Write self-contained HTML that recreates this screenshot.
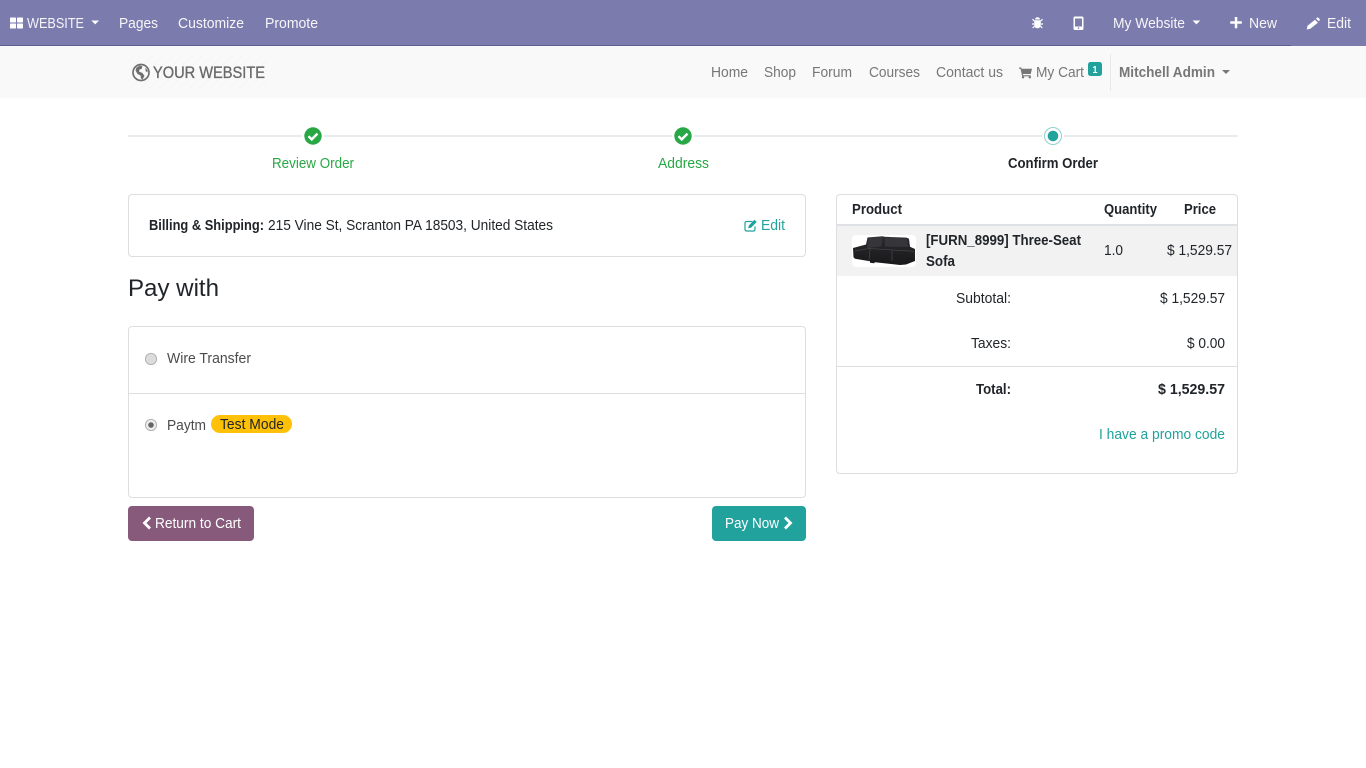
<!DOCTYPE html>
<html lang="en"><head><meta charset="utf-8"><title>Confirm Order</title>
<style>
html,body{margin:0;padding:0;background:#fff;width:1366px;height:768px;overflow:hidden}
svg{display:block}
text{font-family:"Liberation Sans",Arial,sans-serif;font-size:14.4px;fill:#212529}
.w{fill:#fff;fill-opacity:.93}
.n{fill:#777}
.b{font-weight:700}
.t{fill:#21a29c}
.g{fill:#28a745}
</style></head><body>
<svg width="1366" height="768" viewBox="0 0 1366 768" xmlns="http://www.w3.org/2000/svg">
<defs>
<pattern id="h" width="7" height="7" patternUnits="userSpaceOnUse" patternTransform="rotate(45)"><rect width="7" height="7" fill="#f9f9f9"/><rect width="1" height="7" fill="#f5f5f5"/></pattern>
<linearGradient id="sf" x1="0" y1="0" x2="0" y2="1"><stop offset="0" stop-color="#2c2c30"/><stop offset="1" stop-color="#18181a"/></linearGradient>
</defs>
<!-- top bar -->
<rect width="1366" height="45" fill="#7c7bad"/>
<rect y="45" width="1291" height="1" fill="#5f5e90"/>
<rect x="1291" y="45" width="75" height="1" fill="#7c7bad"/>
<rect y="46" width="1366" height="52" fill="#f9f9f9"/>
<g fill="#fff">
<rect x="10" y="17.500" width="6" height="5" rx=".6"/><rect x="17" y="17.500" width="6" height="5" rx=".6"/>
<rect x="10" y="23.500" width="6" height="5" rx=".6"/><rect x="17" y="23.500" width="6" height="5" rx=".6"/>
<path d="M91.300 20.500h7.800l-3.900 3.900z"/>
<path d="M1192.500 20.500h7.800l-3.900 3.900z"/>
<!-- bug -->
<path d="M1035 19.500a2.500 2.300 0 0 1 5 0zM1034.200 20.300h6.600v4.700a3.300 3.300 0 0 1-6.600 0z"/>
<path d="M1034.200 21l-1.700-1.800M1040.800 21l1.700-1.800M1034 24h-2M1041 24h2M1034.400 26.300l-1.700 1.700M1040.600 26.300l1.700 1.700" stroke="#fff" stroke-width="1.200" fill="none"/>
<!-- mobile -->
<path fill-rule="evenodd" d="M1075 16.500h7a1.500 1.500 0 0 1 1.500 1.500v10.500a1.500 1.500 0 0 1-1.500 1.500h-7a1.500 1.500 0 0 1-1.500-1.500v-10.500a1.500 1.500 0 0 1 1.500-1.500zM1075 18.500v8h7v-8zM1077.700 28.100a.8.8 0 1 0 1.600 0a.8.8 0 1 0-1.600 0z"/>
<!-- plus -->
<path d="M1234.800 17h2.500v4.300h4.500v2.500h-4.500v4.500h-2.500v-4.500h-4.500v-2.500h4.500z"/>
<!-- pencil -->
<path d="M1315 19.800l2.900 2.900-7.600 6-3.600.8.800-3.700zM1316 18.600l.9-.9a1 1 0 0 1 1.400 0l1.300 1.300a1 1 0 0 1 0 1.400l-.9 .9z"/>
</g>
<text class="w" x="27" y="28" textLength="57" lengthAdjust="spacingAndGlyphs">WEBSITE</text>
<text class="w" x="119" y="28" textLength="39" lengthAdjust="spacingAndGlyphs">Pages</text>
<text class="w" x="178" y="28" textLength="66" lengthAdjust="spacingAndGlyphs">Customize</text>
<text class="w" x="265" y="28" textLength="53" lengthAdjust="spacingAndGlyphs">Promote</text>
<text class="w" x="1113" y="28" textLength="72" lengthAdjust="spacingAndGlyphs">My Website</text>
<text class="w" x="1249" y="28" textLength="28" lengthAdjust="spacingAndGlyphs">New</text>
<text class="w" x="1327" y="28" textLength="24" lengthAdjust="spacingAndGlyphs">Edit</text>
<!-- logo -->
<rect x="128" y="54" width="139" height="36" fill="url(#h)"/>
<circle cx="141" cy="72.500" r="8" fill="none" stroke="#6f6f6f" stroke-width="1.700"/>
<path d="M136.500 67.500l3.500-2 2.500 1-1 2.500-2 .5-.5 2 3.500 1.500 2 3-2 3.500-1.500-1-.5-3-3-1.500-2-3.500zM145.500 67.500l2 3v2l-2-1.500z" fill="#6f6f6f"/>
<text x="153" y="78" textLength="112" lengthAdjust="spacingAndGlyphs" style="font-size:16.500px;fill:#6a6a6a;stroke:#6a6a6a;stroke-width:.35">YOUR WEBSITE</text>
<!-- nav -->
<text class="n" x="711" y="77" textLength="37" lengthAdjust="spacingAndGlyphs">Home</text>
<text class="n" x="764" y="77" textLength="32" lengthAdjust="spacingAndGlyphs">Shop</text>
<text class="n" x="812" y="77" textLength="40" lengthAdjust="spacingAndGlyphs">Forum</text>
<text class="n" x="869" y="77" textLength="51" lengthAdjust="spacingAndGlyphs">Courses</text>
<text class="n" x="936" y="77" textLength="67" lengthAdjust="spacingAndGlyphs">Contact us</text>
<path d="M1019 67.500h2.300l.4 1.300h10.300l-1.300 5.200h-7.800l.3 1.200h7.500v1.200h-8.500l-1.700-7.700h-1.500z" fill="#777"/>
<circle cx="1023" cy="77.300" r="1.200" fill="#777"/><circle cx="1029.800" cy="77.300" r="1.200" fill="#777"/>
<text class="n" x="1036" y="77" textLength="48" lengthAdjust="spacingAndGlyphs">My Cart</text>
<rect x="1088" y="62" width="14" height="14" rx="2.500" fill="#21a29c"/>
<text x="1092.500" y="72.800" textLength="5" lengthAdjust="spacingAndGlyphs" style="font-size:10.500px;font-weight:700;fill:#fff">1</text>
<rect x="1110" y="54" width="1" height="37" fill="#e6e8ec"/>
<text class="n b" x="1119" y="77" textLength="96" lengthAdjust="spacingAndGlyphs">Mitchell Admin</text>
<path d="M1222 70h8l-4 4z" fill="#777"/>
<!-- progress -->
<rect x="128" y="135" width="1110" height="2" fill="#e9ecef"/>
<circle cx="313" cy="136" r="11" fill="#fff"/><circle cx="683" cy="136" r="11" fill="#fff"/><circle cx="1053" cy="136" r="11" fill="#fff"/>
<circle cx="313" cy="136" r="8.700" fill="#28a745"/>
<path d="M308.500 136.200l3.200 3.200 5.800-5.800" fill="none" stroke="#fff" stroke-width="2.400"/>
<circle cx="683" cy="136" r="8.700" fill="#28a745"/>
<path d="M678.500 136.200l3.200 3.200 5.800-5.800" fill="none" stroke="#fff" stroke-width="2.400"/>
<circle cx="1053" cy="136" r="8.500" fill="#fff" stroke="#8fd0cd" stroke-width="1"/>
<circle cx="1053" cy="136" r="5.300" fill="#21a29c"/>
<text class="g" x="272" y="168" textLength="82" lengthAdjust="spacingAndGlyphs">Review Order</text>
<text class="g" x="658" y="168" textLength="51" lengthAdjust="spacingAndGlyphs">Address</text>
<text class="b" x="1008" y="168" textLength="90" lengthAdjust="spacingAndGlyphs">Confirm Order</text>
<!-- billing card -->
<rect x="128.500" y="194.500" width="677" height="62" rx="3.500" fill="#fff" stroke="#dedede"/>
<text class="b" x="149" y="230" textLength="115" lengthAdjust="spacingAndGlyphs">Billing &amp; Shipping:</text>
<text x="268" y="230" textLength="285" lengthAdjust="spacingAndGlyphs">215 Vine St, Scranton PA 18503, United States</text>
<path d="M752.500 221.500h-6a1.500 1.500 0 0 0-1.500 1.500v6.500a1.500 1.500 0 0 0 1.500 1.500h7a1.500 1.500 0 0 0 1.500-1.500v-3" fill="none" stroke="#21a29c" stroke-width="1.200"/>
<path d="M754.500 219.800l2.200 2.200-5.700 5.700-2.800.6.600-2.800z" fill="#21a29c"/>
<text class="t" x="761" y="230" textLength="24" lengthAdjust="spacingAndGlyphs">Edit</text>
<text x="128" y="296" textLength="91" lengthAdjust="spacingAndGlyphs" style="font-size:24.500px">Pay with</text>
<!-- payment card -->
<rect x="128.500" y="326.500" width="677" height="171" rx="3.500" fill="#fff" stroke="#dedede"/>
<rect x="129" y="393" width="676" height="1" fill="#dedede"/>
<circle cx="151" cy="359" r="5.600" fill="#dcdcdc" stroke="#b4b4b4"/>
<circle cx="151" cy="425" r="5.600" fill="#ececec" stroke="#b4b4b4"/>
<circle cx="151" cy="425" r="2.800" fill="#666"/>
<text x="167" y="363" textLength="84" lengthAdjust="spacingAndGlyphs" style="fill:#4c4c4c">Wire Transfer</text>
<text x="167" y="430" textLength="39" lengthAdjust="spacingAndGlyphs" style="fill:#4c4c4c">Paytm</text>
<rect x="211" y="415" width="81" height="18" rx="9" fill="#ffc107"/>
<text x="220" y="429" textLength="64" lengthAdjust="spacingAndGlyphs">Test Mode</text>
<!-- buttons -->
<rect x="128" y="506" width="126" height="35" rx="4" fill="#875a7b"/>
<path d="M150 517.500l-5.500 5.500 5.500 5.500" fill="none" stroke="#fff" stroke-width="2.800"/>
<text x="155" y="528" textLength="86" lengthAdjust="spacingAndGlyphs" style="fill:#fff">Return to Cart</text>
<rect x="712" y="506" width="94" height="35" rx="4" fill="#21a29c"/>
<text x="725" y="528" textLength="54" lengthAdjust="spacingAndGlyphs" style="fill:#fff">Pay Now</text>
<path d="M785 517.500l5.500 5.500-5.500 5.500" fill="none" stroke="#fff" stroke-width="2.800"/>
<!-- summary card -->
<rect x="836.500" y="194.500" width="401" height="279" rx="3.500" fill="#fff" stroke="#dedede"/>
<text class="b" x="852" y="214" textLength="50" lengthAdjust="spacingAndGlyphs">Product</text>
<text class="b" x="1104" y="214" textLength="53" lengthAdjust="spacingAndGlyphs">Quantity</text>
<text class="b" x="1184" y="214" textLength="32" lengthAdjust="spacingAndGlyphs">Price</text>
<rect x="837" y="224" width="400" height="2" fill="#dee2e6"/>
<rect x="837" y="226" width="400" height="50" fill="#f2f2f2"/>
<rect x="852" y="235" width="64" height="32" rx="4" fill="#fff"/>
<path d="M853 248l13-3.500 1.500-7 15-1.200 2 .5 22 .8 2.500 1.200 1 8 5 2.200v12l-9 3.500-6 .5-25-2.800-1 1-4-.5v-1.500l-15-2.500-1.500-1.500z" fill="url(#sf)"/>
<path d="M868.500 238l14-1-1.500 9.500-14 1.500zM885 237.500l22 1 1 8.500-23-.5z" fill="#36363a"/>
<path d="M855 251l14-2.500 41 2.500 4 .5M870 249l-1 11M892 250v11" stroke="#444448" stroke-width=".8" fill="none"/>
<text class="b" x="926" y="245" textLength="155" lengthAdjust="spacingAndGlyphs">[FURN_8999] Three-Seat</text>
<text class="b" x="926" y="266" textLength="29" lengthAdjust="spacingAndGlyphs">Sofa</text>
<text x="1104" y="255" textLength="19" lengthAdjust="spacingAndGlyphs">1.0</text>
<text x="1167" y="255" textLength="65" lengthAdjust="spacingAndGlyphs">$ 1,529.57</text>
<text x="956" y="303" textLength="55" lengthAdjust="spacingAndGlyphs">Subtotal:</text>
<text x="1160" y="303" textLength="65" lengthAdjust="spacingAndGlyphs">$ 1,529.57</text>
<text x="971" y="348" textLength="40" lengthAdjust="spacingAndGlyphs">Taxes:</text>
<text x="1187" y="348" textLength="38" lengthAdjust="spacingAndGlyphs">$ 0.00</text>
<rect x="837" y="366" width="400" height="1" fill="#dedede"/>
<text class="b" x="976" y="394" textLength="35" lengthAdjust="spacingAndGlyphs">Total:</text>
<text class="b" x="1158" y="394" textLength="67" lengthAdjust="spacingAndGlyphs">$ 1,529.57</text>
<text class="t" x="1099" y="439" textLength="126" lengthAdjust="spacingAndGlyphs">I have a promo code</text>
</svg>
</body></html>
